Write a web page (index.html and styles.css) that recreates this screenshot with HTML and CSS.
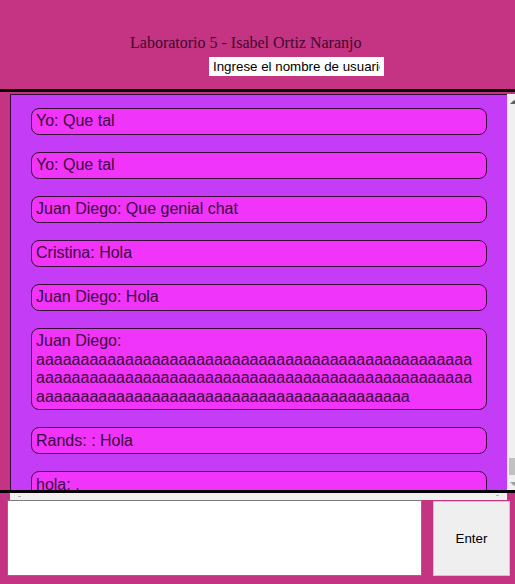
FILE: index.html
```html
<!DOCTYPE html>
<html lang="es">
<head>
<meta charset="utf-8">
<title>Laboratorio 5</title>
<link rel="stylesheet" href="styles.css">
</head>
<body>
<header class="header">
  <h1 class="title">Laboratorio 5 - Isabel Ortiz Naranjo</h1>
  <input class="user-input" type="text" value="Ingrese el nombre de usuario">
</header>
<div class="rule"></div>
<div class="chat-frame">
  <div class="chat">
    <div class="msg">Yo: Que tal</div>
    <div class="msg">Yo: Que tal</div>
    <div class="msg">Juan Diego: Que genial chat</div>
    <div class="msg">Cristina: Hola</div>
    <div class="msg">Juan Diego: Hola</div>
    <div class="msg">Juan Diego: aaaaaaaaaaaaaaaaaaaaaaaaaaaaaaaaaaaaaaaaaaaaaaaaaaaaaaaaaaaaaaaaaaaaaaaaaaaaaaaaaaaaaaaaaaaaaaaaaaaaaaaaaaaaaaaaaaaaaaaaaaaaaaaaaaaaaaaaaaaa</div>
    <div class="msg">Rands: : Hola</div>
    <div class="msg">hola: .</div>
  </div>
  <div class="vscroll">
    <span class="arrow-up"></span>
    <span class="thumb"></span>
    <span class="arrow-down"></span>
  </div>
</div>
<div class="rule"></div>
<div class="hscroll"><span class="harrow-left"></span><span class="harrow-right"></span></div>
<div class="composer">
  <textarea class="message-box"></textarea>
  <button class="send" type="button">Enter</button>
</div>
</body>
</html>
```
FILE: styles.css
```css
html, body {
  margin: 0;
  padding: 0;
}
body {
  background: #c53383;
  width: 515px;
  height: 584px;
  overflow: hidden;
  font-family: "Liberation Sans", Arial, sans-serif;
}
.header {
  height: 89px;
  display: flex;
  flex-direction: column;
  align-items: flex-start;
}
.title {
  margin: 34px 0 0 130px;
  font-family: "Liberation Serif", "Times New Roman", serif;
  font-weight: normal;
  font-size: 16px;
  line-height: 18px;
  color: #3d0a30;
}
.user-input {
  margin: 5px 0 0 209px;
  width: 175px;
  height: 19px;
  box-sizing: border-box;
  border: none;
  padding: 0 4px;
  font-family: "Liberation Sans", Arial, sans-serif;
  font-size: 13.33px;
  color: #000;
  background: #fff;
  outline: none;
}
.rule {
  height: 3px;
  background: #050005;
}
.chat-frame {
  margin-top: 2px;
  height: 396px;
  display: flex;
  overflow: hidden;
}
.chat {
  margin-left: 10px;
  width: 497px;
  flex: none;
  border-left: 1px solid #3a0a3a;
  border-top: 1px solid #3a0a3a;
  background: #c53cf6;
  padding: 13px 20px 0 20px;
  box-sizing: border-box;
  display: flex;
  flex-direction: column;
  gap: 17px;
}
.msg {
  flex: none;
  background: #f034fa;
  border: 1px solid #3a0a3a;
  border-radius: 8px;
  padding: 3.3px 10px 3.3px 4px;
  font-size: 16px;
  line-height: 18.4px;
  color: #3c0a3c;
  overflow-wrap: break-word;
}
.vscroll {
  width: 17px;
  flex: none;
  background: #f0f0f0;
  position: relative;
}
.arrow-up {
  position: absolute;
  left: 3px;
  top: 6px;
  width: 0;
  height: 0;
  border-left: 4px solid transparent;
  border-right: 4px solid transparent;
  border-bottom: 4px solid #606060;
}
.thumb {
  position: absolute;
  left: 2px;
  top: 364px;
  width: 12px;
  height: 17px;
  background: #c1c1c1;
}
.arrow-down {
  position: absolute;
  left: 3px;
  top: 388px;
  width: 0;
  height: 0;
  border-left: 4px solid transparent;
  border-right: 4px solid transparent;
  border-top: 4px solid #a0a0a0;
}
.hscroll {
  margin-left: 10px;
  width: 497px;
  height: 7px;
  background: #f0f0f0;
  position: relative;
}
.harrow-left {
  position: absolute;
  left: 8px;
  top: 3px;
  width: 3px;
  height: 1px;
  background: #b0b0b0;
}
.harrow-right {
  position: absolute;
  right: 8px;
  top: 2px;
  width: 3px;
  height: 1px;
  background: #b0b0b0;
}
.composer {
  display: flex;
  align-items: flex-start;
  padding-left: 7px;
}
.message-box {
  width: 415px;
  height: 76px;
  box-sizing: border-box;
  margin: 0;
  border: 1px solid #7a7a7a;
  background: #fff;
  resize: none;
  padding: 2px;
}
.send {
  margin: 1px 0 0 11px;
  width: 77px;
  height: 75px;
  box-sizing: border-box;
  background: #efefef;
  border: 1px solid #c8c8c8;
  font-family: "Liberation Sans", Arial, sans-serif;
  font-size: 13.33px;
  color: #000;
  padding: 0;
}
```
